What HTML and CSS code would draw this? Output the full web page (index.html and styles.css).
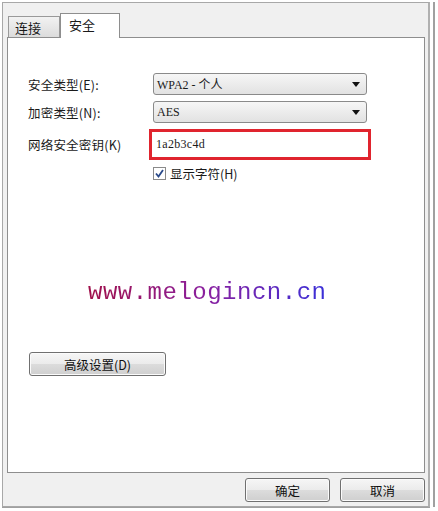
FILE: index.html
```html
<!DOCTYPE html>
<html lang="zh">
<head>
<meta charset="utf-8">
<link rel="stylesheet" href="styles.css">
</head>
<body>
<div class="window">
  <div class="tabs">
    <div class="tab">连接</div>
    <div class="tab active">安全</div>
  </div>
  <div class="panel">
    <div class="form">
      <label class="lbl">安全类型(E):</label>
      <div class="select"><span>WPA2 - 个人</span><i class="arrow"></i></div>
      <label class="lbl">加密类型(N):</label>
      <div class="select"><span>AES</span><i class="arrow"></i></div>
      <label class="lbl">网络安全密钥(K)</label>
      <div class="keybox">1a2b3c4d</div>
      <span></span>
      <div class="check"><span class="box"><svg width="11" height="11" viewBox="0 0 11 11"><path d="M2 5.5 L4.5 8.5 L9 2" fill="none" stroke="#2a4a8a" stroke-width="1.8"/></svg></span>显示字符(H)</div>
    </div>
    <div class="mark">www.melogincn.cn</div>
    <button class="btn adv">高级设置(D)</button>
  </div>
  <div class="footer">
    <button class="btn ok">确定</button>
    <button class="btn ok">取消</button>
  </div>
</div>
</body>
</html>
```
FILE: styles.css
```css
html, body { margin: 0; padding: 0; background: #fff; }
body { width: 438px; height: 511px; overflow: hidden; font-family: "Noto Sans CJK SC", "Liberation Sans", sans-serif; font-size: 12px; color: #1a1a1a; }
.window {
  margin: 2px 0 0 2px;
  width: 428px; height: 505px;
  background: #f0f0f0;
  border: 1px solid #a8a8a8;
  border-right: 2px solid #b0b0b0;
  box-shadow: 3px 0 0 #fff, 5px 0 0 #a0a0a0, 0 1px 0 #a0a0a0;
  display: flex; flex-direction: column;
  padding: 0 0 0 4px;
  box-sizing: border-box;
}
.tabs { display: flex; align-items: flex-end; margin-top: 9px; height: 25px; padding-left: 1px; }
.tab {
  height: 21px; width: 52px; box-sizing: border-box;
  border: 1px solid #999; border-bottom: none;
  background: linear-gradient(#f2f2f2, #dcdcdc);
  font-size: 13px; line-height: 21px; padding-left: 6px;
}
.tab.active { height: 25px; width: 60px; background: #fff; border-color: #8e8e8e; margin-bottom: -1px; position: relative; z-index: 1; line-height: 22px; padding-left: 8px; }
.panel {
  width: 418px; height: 436px; box-sizing: border-box;
  background: #fff; border: 1px solid #8e8e8e;
  padding: 35px 0 0 20px;
  display: flex; flex-direction: column;
}
.form { display: grid; grid-template-columns: 125px 218px; row-gap: 6px; align-items: center; }
.lbl { font-size: 12.5px; letter-spacing: 0.2px; }
.select {
  height: 22px; box-sizing: border-box; width: 214px;
  border: 1px solid #8a8a8a; border-radius: 3px;
  background: linear-gradient(#f6f6f6, #e2e2e2);
  display: flex; align-items: center; justify-content: space-between; padding: 0 6px 0 3px;
  font-family: "Liberation Serif", "Noto Sans CJK SC", serif; font-size: 12px;
}
.arrow { width: 0; height: 0; border-left: 4px solid transparent; border-right: 4px solid transparent; border-top: 5px solid #111; }
.keybox {
  margin-left: -4px; width: 222px; height: 31px; box-sizing: border-box;
  border: 3px solid #e0242e; padding: 0 0 0 4px; line-height: 24px;
  font-family: "Liberation Serif", serif; font-size: 12px; letter-spacing: 0.3px;
}
.check { display: flex; align-items: center; gap: 4px; font-size: 12.5px; height: 18px; margin-top: -2px; }
.box { width: 11px; height: 11px; border: 1px solid #8a8a8a; background: #fff; display: flex; }
.mark {
  margin: 99px 0 0 60px; align-self: flex-start;
  font-family: "Liberation Mono", "DejaVu Sans Mono", monospace; font-size: 24px; letter-spacing: 0.5px;
  background: linear-gradient(90deg, #a0104a, #8a20a0 50%, #3a30d8);
  -webkit-background-clip: text; background-clip: text; color: transparent;
  line-height: 24px;
}
.btn {
  font-family: "Noto Sans CJK SC", sans-serif; font-size: 12.5px; color: #111;
  height: 24px; border: 1px solid #707070; border-radius: 3px;
  background: linear-gradient(#f6f6f6 0%, #ebebeb 50%, #dcdcdc 51%, #cfcfcf 100%);
  padding: 0; box-shadow: inset 0 0 0 1px #fbfbfb;
}
.adv { margin: 47px 0 0 1px; width: 137px; align-self: flex-start; }
.footer { display: flex; justify-content: flex-end; gap: 10px; padding: 5px 0 0 0; margin-right: 3px; }
.ok { width: 85px; height: 24px; }
```
